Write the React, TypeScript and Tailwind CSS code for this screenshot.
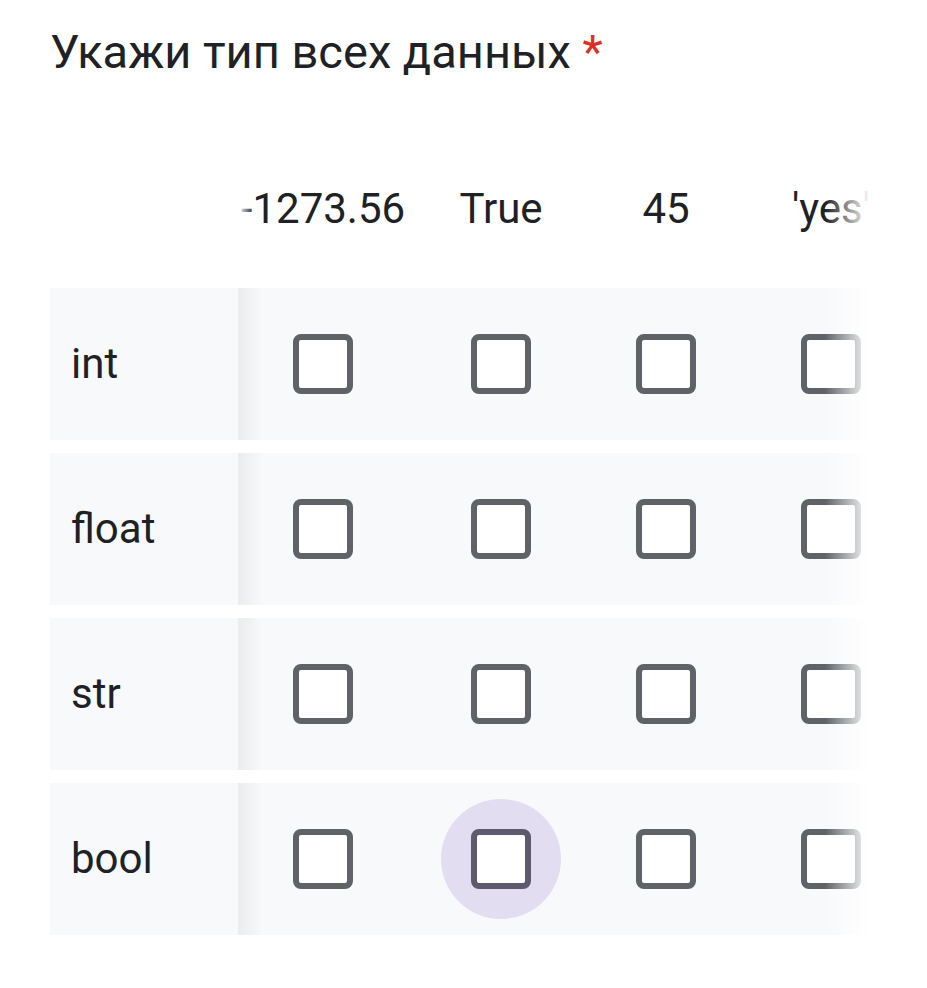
import React from "react";

const cols = [
  { label: "-1273.56", w: "w-[170px]" },
  { label: "True", w: "w-[186px]" },
  { label: "45", w: "w-[144px]" },
  { label: "'yes'", w: "w-[186px]" },
];

const rows = ["int", "float", "str", "bool"];

function Checkbox({ hover }: { hover?: boolean }) {
  return (
    <div
      className={
        hover
          ? "w-[120px] h-[120px] rounded-full bg-[#e2ddf1] flex items-center justify-center"
          : "w-[120px] h-[120px] rounded-full flex items-center justify-center"
      }
    >
      <div
        className={
          hover
            ? "w-[60px] h-[60px] rounded-[8px] border-[6px] border-[#5e5a6e] bg-white"
            : "w-[60px] h-[60px] rounded-[8px] border-[6px] border-[#5f6368] bg-white"
        }
      />
    </div>
  );
}

export default function App() {
  return (
    <div className="min-h-screen bg-white font-['Roboto',sans-serif] text-[#202124]">
      <div className="pl-[50px] pt-[24px]">
        <div className="text-[47px] leading-[56px] whitespace-nowrap">
          Укажи тип всех данных <span className="text-[#d93025]">*</span>
        </div>

        <div className="mt-[105px] flex h-[48px]">
          <div className="w-[188px] shrink-0" />
          <div className="relative w-[632px] shrink-0 overflow-hidden flex">
            {cols.map((c) => (
              <div
                key={c.label}
                className={`${c.w} shrink-0 text-center text-[42px] leading-[48px] whitespace-nowrap`}
              >
                {c.label}
              </div>
            ))}
            <div className="absolute left-0 top-0 h-full w-[16px] bg-gradient-to-r from-white to-transparent" />
            <div className="absolute right-0 top-0 h-full w-[45px] bg-gradient-to-r from-transparent to-white" />
          </div>
        </div>

        <div className="mt-[55px] flex flex-col gap-[13px]">
          {rows.map((r) => (
            <div key={r} className="flex h-[152px]">
              <div className="w-[188px] shrink-0 bg-[#f8f9fa] flex items-center pl-[21px] text-[42px] leading-[48px]">
                {r}
              </div>
              <div className="relative w-[632px] shrink-0 overflow-hidden flex bg-[#f8f9fa]">
                {cols.map((c, ci) => (
                  <div
                    key={c.label}
                    className={`${c.w} shrink-0 flex items-center justify-center`}
                  >
                    <Checkbox hover={r === "bool" && ci === 1} />
                  </div>
                ))}
                <div className="absolute left-0 top-0 h-full w-[24px] bg-gradient-to-r from-[#ececed] via-[#f1f2f3] to-transparent" />
                <div className="absolute right-0 top-0 h-full w-[45px] bg-gradient-to-r from-transparent to-white" />
              </div>
            </div>
          ))}
        </div>

        <div className="mt-[49px] flex items-start gap-[14px] pl-[92px]">
          <svg width="40" height="40" viewBox="0 0 40 40" className="mt-[4px] shrink-0">
            <circle cx="20" cy="20" r="18" fill="#d93025" />
            <rect x="18" y="9" width="4" height="14" fill="#fff" />
            <rect x="18" y="26" width="4" height="4" fill="#fff" />
          </svg>
          <div className="text-[36px] leading-[48px] text-[#d93025] whitespace-nowrap">
            Это обязательный вопрос.
          </div>
        </div>
      </div>
    </div>
  );
}
